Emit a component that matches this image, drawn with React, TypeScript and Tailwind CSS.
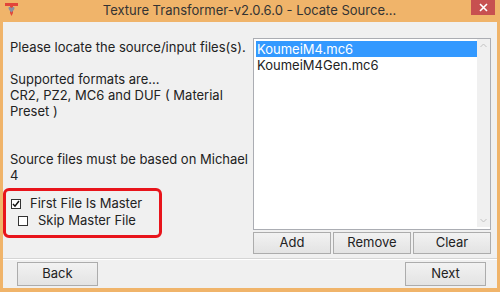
import React from "react";

const font = { fontFamily: 'Inter, "Noto Sans", "Liberation Sans", sans-serif' };

function Check({ checked }: { checked: boolean }) {
  return (
    <div className="w-[10px] h-[10px] border border-[#333333] bg-white flex items-center justify-center shrink-0">
      {checked && (
        <svg width="8" height="8" viewBox="0 0 8 8">
          <path d="M1 4 L3 6.2 L7 1" fill="none" stroke="#111" strokeWidth="1.5" />
        </svg>
      )}
    </div>
  );
}

function Btn({ children, className = "" }: { children: React.ReactNode; className?: string }) {
  return (
    <div
      className={
        "flex items-center justify-center border border-[#ACACAC] bg-gradient-to-b from-[#F2F2F2] to-[#E3E3E3] text-[13px] text-[#222] " +
        className
      }
    >
      {children}
    </div>
  );
}

export default function App() {
  return (
    <div className="w-[500px] h-[292px] bg-[#F0B46A] flex flex-col" style={font}>
      {/* Title bar */}
      <div className="h-[22px] flex items-start relative">
        <svg className="ml-[5px] mt-[3px]" width="13" height="14" viewBox="0 0 13 14">
          <path d="M0 0 H13 V3 H8 V10 L6.5 13 L5 10 V3 H0 Z" fill="#E2453A" />
          <path d="M3.5 5 C3.5 3.8 5.5 3.8 6.5 5 C7.5 3.8 9.5 3.8 9.5 5 C9.5 7 6.5 9.5 6.5 9.5 C6.5 9.5 3.5 7 3.5 5 Z" fill="#8A8FA0" />
        </svg>
        <div className="flex-1 text-center text-[13px] leading-[21px] text-[#333] pl-[10px]">
          Texture Transformer-v2.0.6.0 - Locate Source...
        </div>
        <div className="w-[24px] h-[15px] bg-[#C75050] mr-[5px] flex items-center justify-center">
          <svg width="9" height="9" viewBox="0 0 9 9">
            <path d="M1 1 L8 8 M8 1 L1 8" stroke="white" strokeWidth="1.6" />
          </svg>
        </div>
      </div>

      {/* Content */}
      <div className="mx-[3px] mb-[4px] flex-1 bg-[#F0F0F0] flex flex-col">
        <div className="flex pt-[16px] pr-[6px] h-[232px]">
          {/* Left column */}
          <div className="w-[250px] flex flex-col">
            <div className="pl-[7px] pr-[4px] text-[13px] leading-[16px] text-[#222] pt-[1px]">
              <div>Please locate the source/input files(s).</div>
              <div className="h-[16px]" />
              <div>Supported formats are...</div>
              <div>CR2, PZ2, MC6 and DUF ( Material Preset )</div>
              <div className="h-[32px]" />
              <div>Source files must be based on Michael 4</div>
            </div>
            <div className="mt-[5px] w-[159px] h-[50px] border-[3px] border-[#E8141B] rounded-[6px] pt-[4px] text-[13px] text-[#222]">
              <div className="h-[17px] flex items-center pl-[5px]">
                <Check checked />
                <span className="ml-[9px]">First File Is Master</span>
              </div>
              <div className="h-[17px] flex items-center pl-[12px]">
                <Check checked={false} />
                <span className="ml-[10px]">Skip Master File</span>
              </div>
            </div>
          </div>
          {/* Right column */}
          <div className="w-[238px] flex flex-col gap-[2px]">
            <div className="h-[192px] border border-[#ABADB3] bg-white flex p-[2px] pr-0">
              <div className="flex-1 text-[13px] leading-[16px] text-[#222]">
                <div className="bg-[#3399FF] text-white h-[16px] pl-[1px]">KoumeiM4.mc6</div>
                <div className="h-[16px] pl-[1px]">KoumeiM4Gen.mc6</div>
              </div>
              <div className="w-[13px] -mt-[2px] bg-[#F0F0F0] flex flex-col justify-between items-center py-[4px]">
                <svg width="7" height="5" viewBox="0 0 7 5">
                  <path d="M0.5 4 L3.5 1 L6.5 4" fill="none" stroke="#C2C2C2" strokeWidth="1" />
                </svg>
                <svg width="7" height="5" viewBox="0 0 7 5">
                  <path d="M0.5 1 L3.5 4 L6.5 1" fill="none" stroke="#C2C2C2" strokeWidth="1" />
                </svg>
              </div>
            </div>
            <div className="h-[22px] flex gap-[2px]">
              <Btn className="flex-1">Add</Btn>
              <Btn className="flex-1">Remove</Btn>
              <Btn className="flex-1">Clear</Btn>
            </div>
          </div>
        </div>
        <div className="mt-[4px] h-[1px] bg-[#D5D5D5]" />
        <div className="h-[1px] bg-white" />
        <div className="flex justify-between pl-[14px] pr-[11px] mt-[2px]">
          <Btn className="w-[81px] h-[24px]">Back</Btn>
          <Btn className="w-[81px] h-[24px] border-[#7EB4EA]">Next</Btn>
        </div>
      </div>
    </div>
  );
}
